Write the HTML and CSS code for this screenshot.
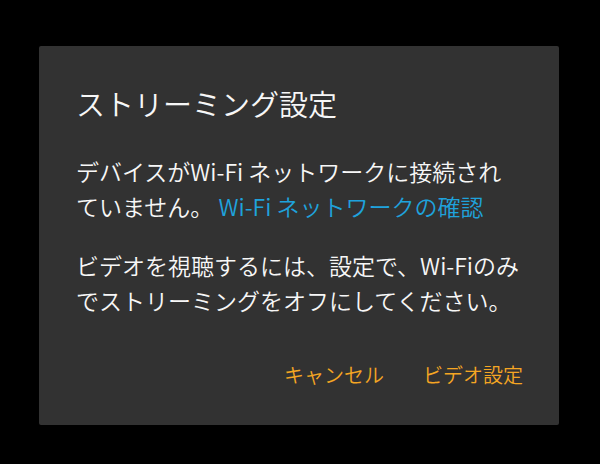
FILE: index.html
```html
<!DOCTYPE html>
<html lang="ja">
<head>
<meta charset="utf-8">
<title>ストリーミング設定</title>
<link rel="stylesheet" href="styles.css">
</head>
<body>
<div class="dialog">
  <h1 class="title">ストリーミング設定</h1>
  <p class="para">デバイスがWi-Fi ネットワークに接続され<br>ていません。 <a class="link" href="#">Wi-Fi ネットワークの確認</a></p>
  <p class="para">ビデオを視聴するには、設定で、Wi-Fiのみ<br>でストリーミングをオフにしてください。</p>
  <div class="actions">
    <span class="btn">キャンセル</span>
    <span class="btn">ビデオ設定</span>
  </div>
</div>
</body>
</html>
```

FILE: styles.css
```css
html, body {
  margin: 0;
  padding: 0;
  background: #000;
}
body {
  width: 600px;
  height: 464px;
  font-family: "Noto Sans CJK JP", "Noto Sans", sans-serif;
}
.dialog {
  box-sizing: border-box;
  margin: 46px 0 0 39px;
  width: 520px;
  height: 379px;
  background: #323232;
  border-radius: 2px;
  padding: 39px 36px 36px 37px;
  display: flex;
  flex-direction: column;
}
.title {
  margin: 0;
  font-size: 29px;
  line-height: 36px;
  font-weight: 350;
  color: #f7f7f7;
  white-space: nowrap;
}
.para {
  margin: 33px 0 0;
  font-size: 23px;
  line-height: 35px;
  font-weight: 350;
  color: #f7f7f7;
  white-space: nowrap;
}
.para + .para {
  margin-top: 24px;
}
.link {
  color: #1fa2dc;
  text-decoration: none;
}
.actions {
  margin-top: auto;
  display: flex;
  justify-content: flex-end;
  gap: 39px;
}
.btn {
  font-size: 20px;
  line-height: 28px;
  font-weight: 350;
  color: #f5a623;
}
```
